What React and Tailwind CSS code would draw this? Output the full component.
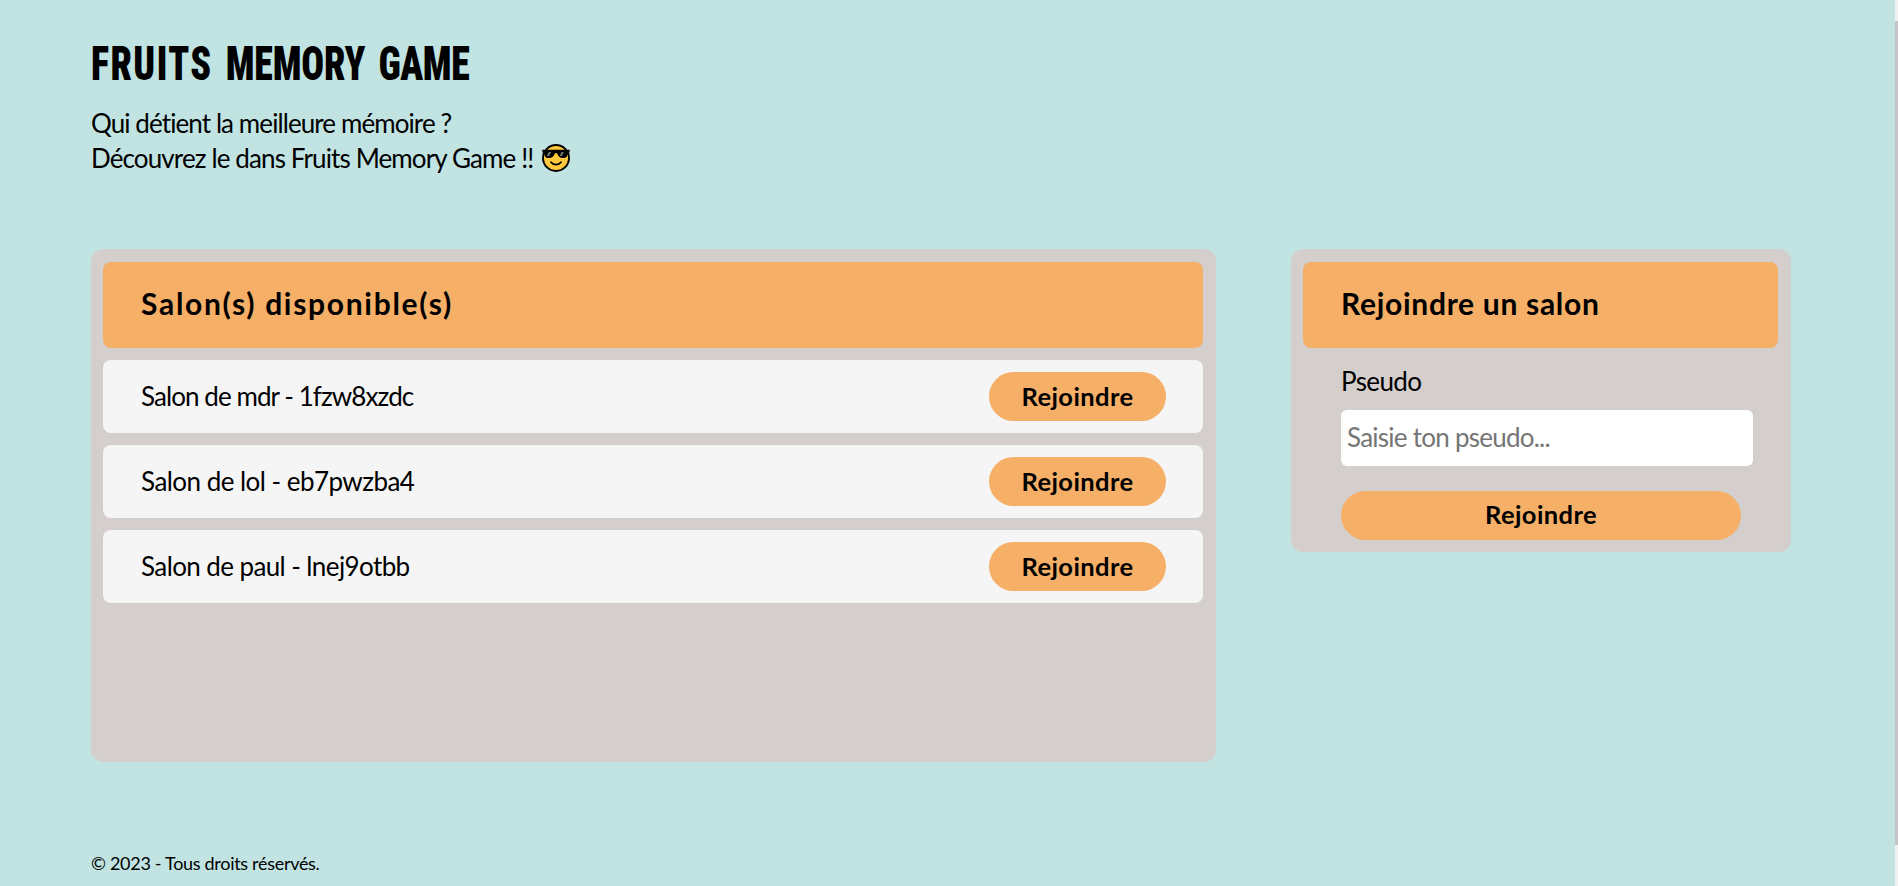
const rooms = [
  { label: "Salon de mdr - 1fzw8xzdc", tracking: "tracking-[-0.93px]" },
  { label: "Salon de lol - eb7pwzba4", tracking: "tracking-[-0.54px]" },
  { label: "Salon de paul - lnej9otbb", tracking: "tracking-[-0.6px]" },
];

function CoolFace() {
  return (
    <svg viewBox="0 0 28 28" className="mb-px ml-[9px] h-7 w-7 shrink-0" role="img" aria-label="😎">
      <circle cx="14" cy="14" r="13" fill="#ffc83d" stroke="#000" strokeWidth="1.9" />
      <path d="M0.3 5.8H27.7V8.4H26C25.6 12.6 24.2 14 21 14C17.8 14 16 12.3 15.2 9.2H12.8C12 12.3 10.2 14 7 14C3.8 14 2.4 12.6 2 8.4H0.3Z" fill="#000" />
      <path d="M6.8 8H9.2L7 12H4.8ZM19.6 8H22L19.8 12H17.6Z" fill="#777" />
      <path d="M9 18.2C11.4 21.3 16.6 21.3 19 18.2" fill="none" stroke="#000" strokeWidth="1.8" strokeLinecap="round" />
    </svg>
  );
}

function PanelTitle({ children, className }) {
  return (
    <div className="flex h-[86px] shrink-0 items-center rounded-lg bg-[#f5af67] pb-[3px] pl-[38px]">
      <h2 className={"text-[30px] font-bold whitespace-nowrap " + className}>{children}</h2>
    </div>
  );
}

function JoinButton({ className }) {
  return (
    <button className={"flex h-[49px] items-center justify-center rounded-full bg-[#f5af67] text-[25.5px] font-bold tracking-[0.4px] " + className}>
      Rejoindre
    </button>
  );
}

export default function App() {
  return (
    <div className="flex h-[886px] overflow-hidden bg-[#c1e4e3] font-['Lato',sans-serif] text-black">
      <div className="flex-1 pl-[91px]">
        <header className="pt-9">
          <h1 className="h-14 origin-left scale-x-[0.79] font-['Roboto',sans-serif] text-[48px] leading-[56px] font-black whitespace-nowrap [font-stretch:75%] [word-spacing:5.5px]">
            <span className="tracking-[1.8px]">FRUITS</span> <span className="tracking-[-0.2px]">MEMORY</span>{" "}
            <span className="tracking-[-0.6px]">GAME</span>
          </h1>
          <div className="mt-[14px] text-[26px] leading-[35px]">
            <p className="tracking-[-0.91px]">Qui détient la meilleure mémoire ?</p>
            <p className="flex items-center tracking-[-0.88px]">
              Découvrez le dans Fruits Memory Game !!
              <CoolFace />
            </p>
          </div>
        </header>

        <main className="mt-[73px] flex items-start gap-[75px]">
          <section className="flex h-[513px] w-[1125px] flex-col gap-3 rounded-xl bg-[#d4cecd] pt-[13px] pr-[13px] pl-3">
            <PanelTitle className="tracking-[1.7px]">Salon(s) disponible(s)</PanelTitle>
            {rooms.map((room) => (
              <div key={room.label} className="flex h-[73px] items-center justify-between rounded-lg bg-[#f5f5f5] pr-[37px] pl-[38px]">
                <span className={"pb-[1px] text-[26px] " + room.tracking}>{room.label}</span>
                <JoinButton className="w-[177px] pb-px" />
              </div>
            ))}
          </section>

          <section className="w-[500px] rounded-xl bg-[#d4cecd] pt-[13px] pr-[13px] pb-3 pl-3">
            <PanelTitle className="tracking-[0.7px]">Rejoindre un salon</PanelTitle>
            <div className="flex flex-col pl-[38px]">
              <label htmlFor="pseudo" className="mt-[15px] text-[26px] leading-9 tracking-[-0.6px]">Pseudo</label>
              <input
                id="pseudo"
                placeholder="Saisie ton pseudo..."
                className="mt-[11px] h-14 w-[412px] rounded-md bg-white pb-0.5 pl-1.5 text-[26px] tracking-[-0.75px] placeholder:text-[#757575]"
              />
              <JoinButton className="mt-[25px] w-[400px] pb-[3px]" />
            </div>
          </section>
        </main>

        <footer className="mt-[89px] text-[18px] leading-6 tracking-[-0.3px]">© 2023 - Tous droits réservés.</footer>
      </div>

      <div className="w-[3px] bg-[#f0f0f0] pt-[21px]">
        <div className="h-[824px] bg-[#c6c4c6]" />
      </div>
    </div>
  );
}
